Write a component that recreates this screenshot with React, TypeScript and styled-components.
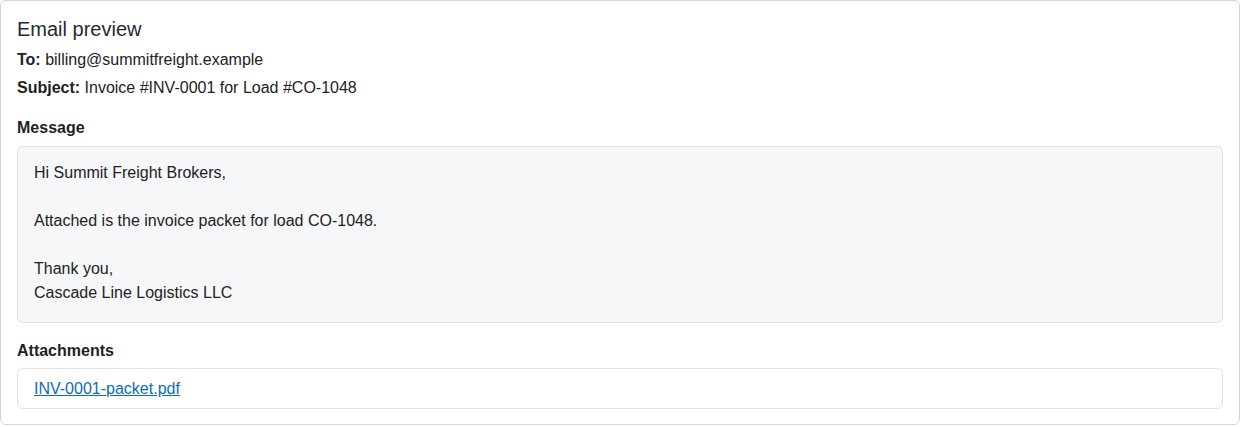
import React from "react";
import styled, { createGlobalStyle } from "styled-components";

const GlobalStyle = createGlobalStyle`
  html, body {
    margin: 0;
    padding: 0;
    background: #ffffff;
  }
  body {
    font-family: "Liberation Sans", Arial, sans-serif;
    color: #1f1f1f;
  }
  * { box-sizing: border-box; }
`;

const Card = styled.section`
  width: 1240px;
  border: 1px solid #d3d3d3;
  border-radius: 6px;
  padding: 16px 16px 15px;
  background: #ffffff;
`;

const Title = styled.h2`
  margin: 0 0 7px;
  font-size: 20px;
  font-weight: 400;
  line-height: 24px;
  color: #1f2933;
`;

const MetaRow = styled.div<{ $gap?: number }>`
  font-size: 16px;
  line-height: 24px;
  color: #222222;
  margin-bottom: ${(p) => p.$gap ?? 0}px;
`;

const MetaLabel = styled.strong`
  font-weight: 700;
  color: #1f1f1f;
`;

const SectionLabel = styled.div<{ $top: number; $bottom: number }>`
  margin-top: ${(p) => p.$top}px;
  margin-bottom: ${(p) => p.$bottom}px;
  font-size: 16px;
  font-weight: 700;
  line-height: 24px;
  color: #1f1f1f;
`;

const MessageBox = styled.div`
  border: 1px solid #dfe1e5;
  border-radius: 6px;
  background: #f6f7f9;
  padding: 14px 16px 17px;
  font-size: 16px;
  line-height: 24px;
  color: #222222;
  white-space: pre-wrap;
`;

const AttachmentBox = styled.div`
  border: 1px solid #dfe1e5;
  border-radius: 6px;
  background: #ffffff;
  padding: 8px 16px 8px;
  font-size: 16px;
  line-height: 23px;
`;

const AttachmentLink = styled.a`
  color: #0b6cb8;
  text-decoration: underline;
`;

const message = `Hi Summit Freight Brokers,

Attached is the invoice packet for load CO-1048.

Thank you,
Cascade Line Logistics LLC`;

export default function App() {
  return (
    <>
      <GlobalStyle />
      <Card>
        <Title>Email preview</Title>
        <MetaRow $gap={4}>
          <MetaLabel>To:</MetaLabel> billing@summitfreight.example
        </MetaRow>
        <MetaRow>
          <MetaLabel>Subject:</MetaLabel> Invoice #INV-0001 for Load #CO-1048
        </MetaRow>
        <SectionLabel $top={16} $bottom={6}>Message</SectionLabel>
        <MessageBox>{message}</MessageBox>
        <SectionLabel $top={16} $bottom={5}>Attachments</SectionLabel>
        <AttachmentBox>
          <AttachmentLink href="#">INV-0001-packet.pdf</AttachmentLink>
        </AttachmentBox>
      </Card>
    </>
  );
}
